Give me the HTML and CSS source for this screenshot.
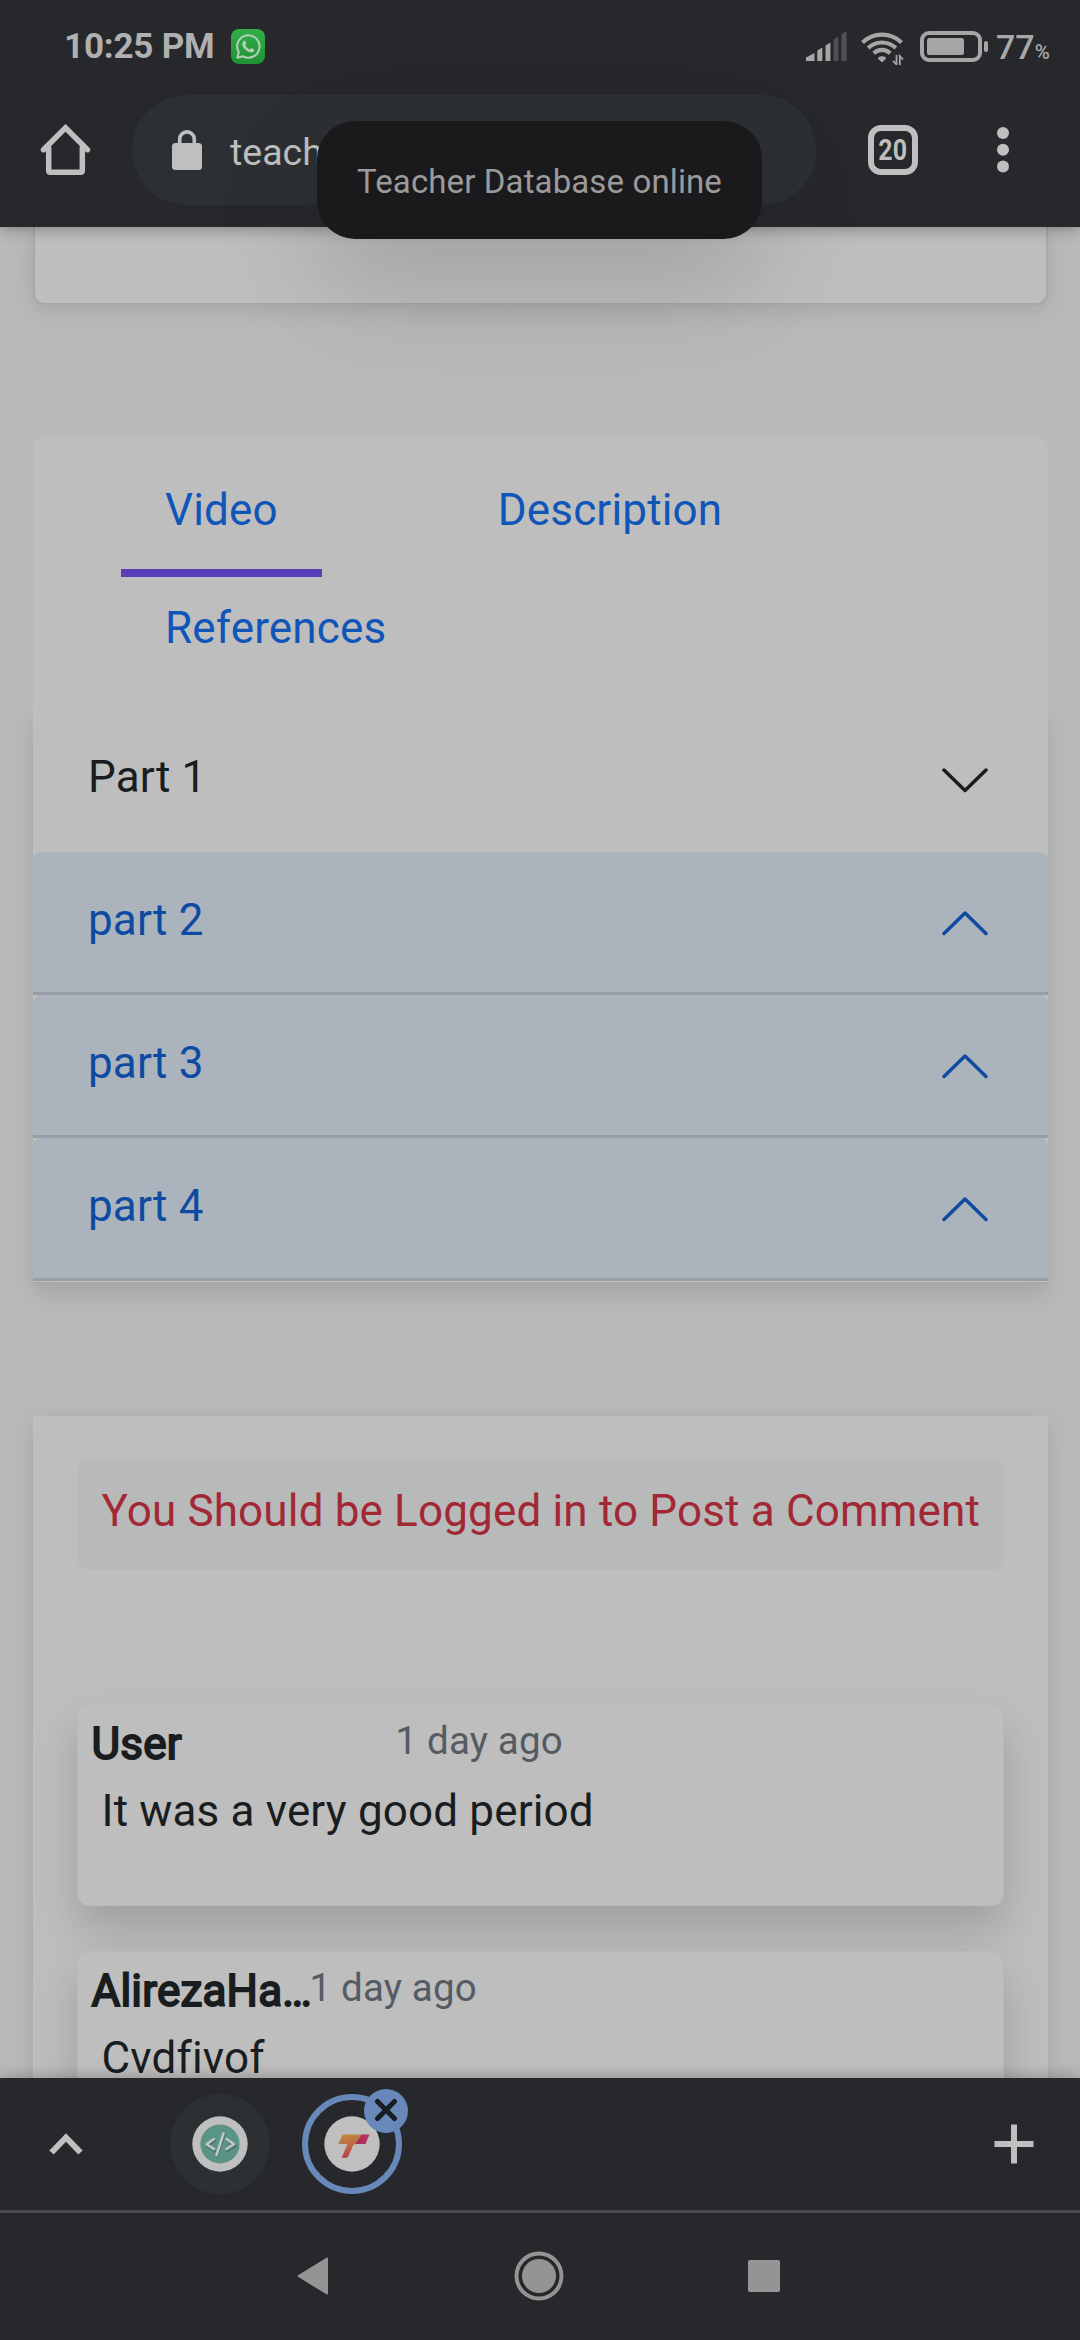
FILE: index.html
```html
<!DOCTYPE html>
<html lang="en">
<head>
<meta charset="utf-8">
<title>Teacher Database online</title>
<link rel="stylesheet" href="styles.css">
</head>
<body>
<div class="screen">
  <header class="top">
    <div class="status">
      <span class="clock">10:25 PM</span>
      <svg class="whatsapp" width="34" height="35" viewBox="0 0 34 35">
        <defs><linearGradient id="wa" x1="0" y1="0" x2="0" y2="1"><stop offset="0" stop-color="#33ad4a"/><stop offset="1" stop-color="#1f9136"/></linearGradient></defs>
        <rect width="34" height="35" rx="8" fill="url(#wa)"/>
        <path d="M7.8 23.3A11.2 11.2 0 1 1 12 27.3L6.3 28.8Z" fill="none" stroke="#b4cfb6" stroke-width="2" stroke-linejoin="round"/>
        <path d="M12.3 12.2c.9-.9 1.6-.7 2 .1l.9 2c.2.6-.1 1-.9 1.900.9 1.900 2.500 3.400 4.600 4.300 1-1.300 1.300-1.500 1.900-1.200l2 1c.7.4.5 1.300 0 2-1.300 1.500-3.200 1.500-5.400.5-2.600-1.200-4.600-3.200-5.700-5.900-.7-1.700-.6-3.600.6-4.700Z" fill="#b4cfb6"/>
      </svg>
      <svg class="signal" width="42" height="30" viewBox="0 0 42 30">
        <g fill="#a6a6a6"><path d="M0 30v-3.500L8.500 22V30Z"/><path d="M11.300 30V19.500L16.300 16.500V30Z"/><path d="M19.500 30V14.500L24.400 11.500V30Z"/></g>
        <g fill="#4f5052"><path d="M27.500 30V8.500L32.400 5.500V30Z"/><path d="M35.500 30V3L40.600 0V30Z"/></g>
      </svg>
      <svg class="wifi" width="44" height="34" viewBox="0 0 44 34">
        <g fill="none" stroke="#a6a6a6" stroke-width="4.200"><path d="M1.500 11.500A28 28 0 0 1 40.500 11.500"/><path d="M7.200 17A20 20 0 0 1 34.800 17"/><path d="M12.800 22.200A12 12 0 0 1 29.200 22.200"/></g>
        <path d="M17 27.200a6 6 0 0 1 8 0L21 31Z" fill="#a6a6a6" stroke="#a6a6a6" stroke-linejoin="round"/>
        <path d="M35.500 24V33.500L32 29.800M38.800 34V25L42 28.500" fill="none" stroke="#a6a6a6" stroke-width="1.800"/>
      </svg>
      <svg class="battery" width="70" height="31" viewBox="0 0 70 31">
        <rect x="2" y="2" width="58" height="27" rx="7" fill="none" stroke="#a6a6a6" stroke-width="4"/>
        <rect x="7" y="7" width="37" height="17" rx="2.500" fill="#a6a6a6"/>
        <rect x="64" y="10" width="4" height="11" rx="2" fill="#a6a6a6"/>
      </svg>
      <span class="percent">77<small>%</small></span>
    </div>
    <div class="toolbar">
      <svg class="home" width="52" height="52" viewBox="0 0 52 52" fill="none" stroke="#bfbfbf" stroke-width="5.500" stroke-linejoin="round" stroke-linecap="round"><path d="M8.700 24V46.500Q8.700 48.300 10.500 48.300H40.500Q42.300 48.300 42.300 46.500V24"/><path d="M3.500 25.700L25.500 3.800 47.500 25.700" stroke-linejoin="miter"/></svg>
      <div class="url">
        <svg class="lock" width="30" height="40" viewBox="0 0 30 40"><rect y="13" width="30" height="27" rx="3.500" fill="#bfbfbf"/><path d="M7.700 15V9.200a7.300 7.300 0 0 1 14.600 0V15" fill="none" stroke="#bfbfbf" stroke-width="3.600"/></svg>
        <span>teach</span>
      </div>
      <div class="tabcount"><span>20</span></div>
      <svg class="dots" width="12" height="46" viewBox="0 0 12 46" fill="#bfbfbf"><circle cx="6" cy="6" r="6"/><circle cx="6" cy="22.800" r="6"/><circle cx="6" cy="39.500" r="6"/></svg>
    </div>
    <div class="toast">Teacher Database online</div>
  </header>

  <main class="page">
    <div class="card player"></div>
    <section class="lesson">
      <nav class="tabs">
        <a class="active">Video</a>
        <a>Description</a>
        <a>References</a>
      </nav>
      <div class="accordion">
        <div class="item">Part 1
          <svg width="46" height="26" viewBox="0 0 46 26"><path d="M2 2L23 22.500 44 2"/></svg>
        </div>
        <div class="item open">part 2
          <svg width="46" height="26" viewBox="0 0 46 26"><path d="M2 23.500L23 3 44 23.500"/></svg>
        </div>
        <div class="item open">part 3
          <svg width="46" height="26" viewBox="0 0 46 26"><path d="M2 23.500L23 3 44 23.500"/></svg>
        </div>
        <div class="item open">part 4
          <svg width="46" height="26" viewBox="0 0 46 26"><path d="M2 23.500L23 3 44 23.500"/></svg>
        </div>
      </div>
    </section>
    <section class="comments">
      <div class="alert">You Should be Logged in to Post a Comment</div>
      <article class="comment">
        <div class="meta"><b class="name">User</b><time>1 day ago</time></div>
        <p>It was a very good period</p>
      </article>
      <article class="comment">
        <div class="meta"><b class="name long">AlirezaHa…</b><time>1 day ago</time></div>
        <p>Cvdfivof</p>
      </article>
    </section>
  </main>

  <footer class="bottom">
    <div class="tabstrip">
      <svg class="up" width="34" height="24" viewBox="0 0 34 24"><path d="M2.500 20.500L17 5.500 31.500 20.500" fill="none" stroke="#bfbfbf" stroke-width="6"/></svg>
      <div class="fav">
        <svg width="58" height="58" viewBox="0 0 58 58"><circle cx="29" cy="29" r="27.700" fill="#bfbfbf"/><circle cx="29" cy="29" r="19.600" fill="#5a9484"/><g fill="none" stroke-width="2.500" stroke-linecap="round" stroke-linejoin="round"><path stroke="#46766a" d="M24 25.500L16 31 24 36M36 25.500L44.500 31 36 36M33.500 19.500L26 41"/><path stroke="#c3c8c6" d="M23 24L15.500 29.200 23 34M35.500 24L43 29.200 35.500 34M32.500 18.500L25.500 40"/></g></svg>
      </div>
      <div class="fav current">
        <svg width="58" height="58" viewBox="0 0 58 58">
          <defs>
            <linearGradient id="tg" x1="0.200" y1="0" x2="0.400" y2="1"><stop offset="0" stop-color="#c28a3c"/><stop offset="1" stop-color="#b9434f"/></linearGradient>
            <linearGradient id="tr" x1="0" y1="0" x2="1" y2="0"><stop offset="0" stop-color="#a52b50"/><stop offset="1" stop-color="#b83468"/></linearGradient>
          </defs>
          <circle cx="29" cy="29" r="27.700" fill="#bfbfbf"/>
          <path d="M19.500 19.500H39L32.500 29.500H30.500L25.500 41Q24.500 43 22.500 43H18.500L24.500 29H15.500Z" fill="url(#tg)"/>
          <path d="M38.500 19.500H46.500L42.500 29H32.500Z" fill="url(#tr)"/>
        </svg>
        <span class="close"><svg width="24" height="24" viewBox="0 0 24 24"><path d="M3.500 3.500L20.500 20.500M20.500 3.500L3.500 20.500" stroke="#191c20" stroke-width="5" stroke-linecap="round"/></svg></span>
      </div>
      <svg class="plus" width="40" height="40" viewBox="0 0 40 40"><path d="M20 .5V39.500M.5 20H39.500" stroke="#bfbfbf" stroke-width="6"/></svg>
    </div>
    <div class="sysnav">
      <svg width="32" height="38" viewBox="0 0 32 38"><path d="M1.500 19L30 1.500V36.500Z" fill="#949494" stroke="#949494" stroke-width="2" stroke-linejoin="round"/></svg>
      <svg width="50" height="50" viewBox="0 0 50 50"><circle cx="25" cy="25" r="22.500" fill="none" stroke="#949494" stroke-width="4"/><circle cx="25" cy="25" r="17" fill="#949494"/></svg>
      <svg width="32" height="32" viewBox="0 0 32 32"><rect width="32" height="32" rx="2" fill="#949494"/></svg>
    </div>
  </footer>
</div>
</body>
</html>
```
FILE: styles.css
```css
* { box-sizing: border-box; }
body { margin: 0; background: #27282c; font-family: Roboto, sans-serif; }
svg { display: block; flex: none; }
.screen { width: 1080px; height: 2340px; display: flex; flex-direction: column; overflow: hidden; }

.top { position: relative; z-index: 2; height: 227px; background: #27282c; box-shadow: 0 2px 14px rgba(0,0,0,.32); }
.status { display: flex; height: 95px; align-items: flex-start; padding: 0 30px 0 64px; color: #b0b0b0; }
.clock { font-weight: 700; font-size: 35px; line-height: 94px; letter-spacing: -.2px; white-space: nowrap; width: 167px; }
.whatsapp { margin-top: 29px; }
.signal { margin: 31px 0 0 auto; }
.wifi { margin: 31px 0 0 13px; }
.battery { margin: 31px 0 0 15px; }
.percent { font-size: 34px; font-weight: 500; line-height: 94px; margin-left: 6px; width: 54px; white-space: nowrap; color: #a9a9a9; }
.percent small { font-size: 20.500px; }

.toolbar { display: flex; align-items: center; height: 110px; padding-left: 40px; }
.home { margin-right: 40px; }
.url { width: 684px; height: 110px; border-radius: 55px; background: #2c3033; display: flex; align-items: center; padding-left: 40px; color: #bfbfbf; font-size: 37.500px; }
.url span { margin-left: 28px; line-height: 60px; padding-top: 3px; }
.tabcount { margin-left: 52px; width: 50px; height: 50px; border: 6px solid #bfbfbf; border-radius: 13px; display: flex; align-items: center; justify-content: center; color: #bfbfbf; font-size: 29px; font-weight: 700; line-height: 36px; }
.tabcount span { transform: scaleX(.86); }
.dots { margin-left: 79px; }

.toast { position: absolute; left: 317px; top: 121px; width: 445px; height: 118px; border-radius: 38px; background: #1a1a1c; color: #9b9b9b; font-size: 33px; letter-spacing: .12px; line-height: 122px; text-align: center; white-space: nowrap; box-shadow: 0 44px 110px rgba(0,0,0,.16); }

.page { height: 1851px; overflow: hidden; background: #b8baba; padding: 0 32px 0 33px; font-size: 44px; line-height: 66px; letter-spacing: .16px; color: #191d20; }
.player { height: 77.500px; margin-bottom: 132.500px; background: #bebebe; border: 2px solid #a8a8a8; border-top: 0; border-radius: 0 0 11px 11px; box-shadow: 0 5px 22px rgba(0,0,0,.1); }

.lesson { background: #bebebe; border-radius: 11px 11px 0 0; }
.tabs { display: flex; flex-wrap: wrap; padding: 22px 22px 14px; height: 272px; align-content: flex-start; }
.tabs a { margin: 0 66px; padding: 18px 44px 26px; border-bottom: 8px solid transparent; color: #1055b8; }
.tabs .active { border-color: #5a3fb8; }
.accordion { height: 574.500px; border-bottom: 2px solid #a8a8a8; background: #bebebe; box-shadow: 0 11px 22px -2px rgba(0,0,0,.12); }
.item { height: 143px; padding: 35px 60px 0 55px; display: flex; justify-content: space-between; }
.item svg { margin-top: 23.500px; fill: none; stroke: #191d20; stroke-width: 3.500px; stroke-linecap: round; stroke-linejoin: round; }
.item.open { color: #0d4ba3; border-bottom: 3px solid #979ea8; background: radial-gradient(circle at 9px 9px, #abb3bd 9px, transparent 9.500px) 0 0 / 9px 9px no-repeat, radial-gradient(circle at 0 9px, #abb3bd 9px, transparent 9.500px) 100% 0 / 9px 9px no-repeat, linear-gradient(#abb3bd, #abb3bd) 9px 0 / calc(100% - 18px) 9px no-repeat, linear-gradient(#abb3bd, #abb3bd) 0 9px / 100% 100% no-repeat; }
.item.open svg { stroke: #114aa1; margin-top: 23px; }

.comments { margin-top: 132.500px; height: 1000px; padding: 44px; background: #bebebe; box-shadow: 0 6px 22px rgba(0,0,0,.1); }
.alert { height: 110px; padding: 18px 0 0 24.500px; border-radius: 12px; background: #b8baba; color: #a32836; white-space: nowrap; margin-bottom: 134px; }
.comment { height: 202px; margin-bottom: 44.800px; padding: 6px 0 0 13.500px; border: 1.500px solid #bababa; border-radius: 12px; background: #bebebe; box-shadow: 0 22px 44px rgba(0,0,0,.17); }
.meta { display: flex; height: 67px; }
.name { width: 304px; font-weight: 400; -webkit-text-stroke: 1.900px #191d20; letter-spacing: .2px; }
.name.long { width: 218px; }
.meta time { font-size: 38.500px; line-height: 60px; color: #545b62; }
.comment p { margin: 0 0 0 10px; }

.bottom { position: relative; z-index: 2; background: #27282c; height: 262px; box-shadow: 0 -1px 14px rgba(0,0,0,.25); }
.tabstrip { display: flex; align-items: center; height: 135px; padding: 0 46px 0 49px; border-bottom: 3px solid #47494d; }
.up { margin: 0 87px 0 0; }
.fav { position: relative; width: 100px; height: 100px; border-radius: 50%; background: #2c3033; display: flex; align-items: center; justify-content: center; margin-right: 32px; }
.fav.current { background: none; border: 6px solid #6888ba; }
.close { position: absolute; right: -12px; top: -11px; width: 44px; height: 44px; border-radius: 50%; background: #6888ba; display: flex; align-items: center; justify-content: center; }
.close svg { margin-top: -3px; }
.plus { margin-left: auto; }
.sysnav { display: flex; align-items: center; height: 125px; padding: 0 300px 0 297px; justify-content: space-between; }
```
